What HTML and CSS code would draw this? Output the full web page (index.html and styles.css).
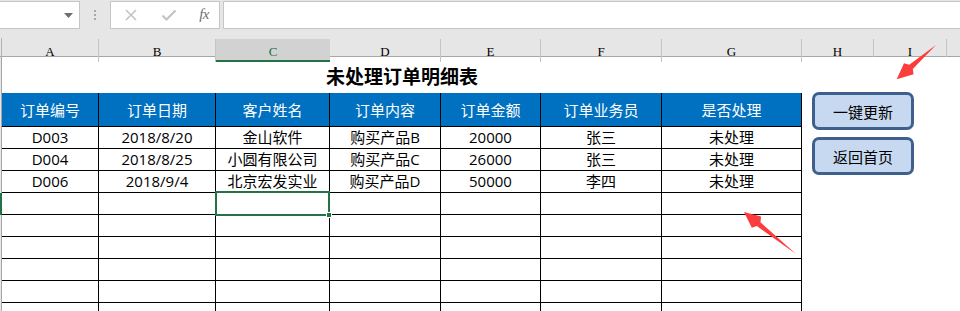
FILE: index.html
```html
<!DOCTYPE html>
<html lang="zh-CN">
<head>
<meta charset="utf-8">
<title>未处理订单明细表</title>
<link rel="stylesheet" href="styles.css">
</head>
<body>
<div class="app">
  <div class="toolbar">
    <div class="namebox">
      <svg class="caret" width="9" height="5" viewBox="0 0 9 5"><path d="M0 0H9L4.5 5Z" fill="#6e6e6e"/></svg>
    </div>
    <div class="grip"><i></i><i></i><i></i></div>
    <div class="fxbtns">
      <svg class="ico" width="14" height="14" viewBox="0 0 14 14"><path d="M2 2L12 12M12 2L2 12" stroke="#c3c3c3" stroke-width="1.6" fill="none"/></svg>
      <svg class="ico" width="16" height="14" viewBox="0 0 16 14"><path d="M1.5 7.5L5.5 11.5L14.5 2.5" stroke="#c3c3c3" stroke-width="2.2" fill="none"/></svg>
      <span class="fx">fx</span>
    </div>
    <div class="formula"></div>
  </div>

  <div class="colheads">
    <div class="edge"></div>
    <div class="ch">A</div>
    <div class="ch">B</div>
    <div class="ch sel">C</div>
    <div class="ch">D</div>
    <div class="ch">E</div>
    <div class="ch">F</div>
    <div class="ch">G</div>
    <div class="ch">H</div>
    <div class="ch">I</div>
    <div class="ch last"></div>
  </div>

  <div class="sheet">
    <div class="row title-row">
      <div class="edge"></div>
      <div class="title">未处理订单明细表</div>
      <div class="blank"></div><div class="blank"></div><div class="blank"></div>
    </div>
    <div class="row head-row">
      <div class="edge"></div>
      <div class="c h">订单编号</div>
      <div class="c h">订单日期</div>
      <div class="c h">客户姓名</div>
      <div class="c h">订单内容</div>
      <div class="c h">订单金额</div>
      <div class="c h">订单业务员</div>
      <div class="c h">是否处理</div>
      <div class="blank"></div><div class="blank"></div><div class="blank"></div>
    </div>
    <div class="row">
      <div class="edge"></div>
      <div class="c">D003</div><div class="c">2018/8/20</div><div class="c">金山软件</div><div class="c">购买产品B</div><div class="c">20000</div><div class="c">张三</div><div class="c">未处理</div>
      <div class="blank"></div><div class="blank"></div><div class="blank"></div>
    </div>
    <div class="row">
      <div class="edge"></div>
      <div class="c">D004</div><div class="c">2018/8/25</div><div class="c">小圆有限公司</div><div class="c">购买产品C</div><div class="c">26000</div><div class="c">张三</div><div class="c">未处理</div>
      <div class="blank"></div><div class="blank"></div><div class="blank"></div>
    </div>
    <div class="row">
      <div class="edge"></div>
      <div class="c">D006</div><div class="c">2018/9/4</div><div class="c">北京宏发实业</div><div class="c">购买产品D</div><div class="c">50000</div><div class="c">李四</div><div class="c">未处理</div>
      <div class="blank"></div><div class="blank"></div><div class="blank"></div>
    </div>
    <div class="row">
      <div class="edge active"></div>
      <div class="c"></div><div class="c"></div><div class="c"></div><div class="c"></div><div class="c"></div><div class="c"></div><div class="c"></div>
      <div class="blank"></div><div class="blank"></div><div class="blank"></div>
    </div>
    <div class="row">
      <div class="edge"></div>
      <div class="c"></div><div class="c"></div><div class="c"></div><div class="c"></div><div class="c"></div><div class="c"></div><div class="c"></div>
      <div class="blank"></div><div class="blank"></div><div class="blank"></div>
    </div>
    <div class="row">
      <div class="edge"></div>
      <div class="c"></div><div class="c"></div><div class="c"></div><div class="c"></div><div class="c"></div><div class="c"></div><div class="c"></div>
      <div class="blank"></div><div class="blank"></div><div class="blank"></div>
    </div>
    <div class="row">
      <div class="edge"></div>
      <div class="c"></div><div class="c"></div><div class="c"></div><div class="c"></div><div class="c"></div><div class="c"></div><div class="c"></div>
      <div class="blank"></div><div class="blank"></div><div class="blank"></div>
    </div>
    <div class="row">
      <div class="edge"></div>
      <div class="c"></div><div class="c"></div><div class="c"></div><div class="c"></div><div class="c"></div><div class="c"></div><div class="c"></div>
      <div class="blank"></div><div class="blank"></div><div class="blank"></div>
    </div>
    <div class="row">
      <div class="edge"></div>
      <div class="c"></div><div class="c"></div><div class="c"></div><div class="c"></div><div class="c"></div><div class="c"></div><div class="c"></div>
      <div class="blank"></div><div class="blank"></div><div class="blank"></div>
    </div>
  </div>

  <div class="selbox"><span class="handle"></span></div>

  <div class="shape-btn btn-update">一键更新</div>
  <div class="shape-btn btn-home">返回首页</div>

  <svg class="arrows" width="960" height="311" viewBox="0 0 960 311">
    <polygon fill="#fb3d3d" points="896.7,79.3 904.0,63.3 909.2,64.7 936,45 912.8,68.9 913.6,74.3"/>
    <polygon fill="#fb3d3d" points="744,212 761.0,216.5 760.5,222.3 796,254 756.9,226.1 751.8,227.7"/>
  </svg>
</div>
</body>
</html>
```
FILE: styles.css
```css
* { box-sizing: border-box; }

html, body {
  margin: 0;
  padding: 0;
  background: #ffffff;
}

body {
  width: 960px;
  height: 311px;
  overflow: hidden;
  font-family: "Open Sans", "Noto Sans CJK SC", sans-serif;
}

.app {
  position: relative;
  width: 960px;
  height: 311px;
  overflow: hidden;
  --cols: 2px 97px 117px 114px 111px 100px 121px 140px 72px 73px 13px;
}

/* ---------- formula toolbar ---------- */
.toolbar {
  height: 38px;
  background: #e6e6e6;
  display: flex;
  align-items: flex-start;
  padding-top: 1px;
}

.namebox {
  width: 80px;
  height: 28px;
  background: #ffffff;
  border: 1px solid #c6c6c6;
  border-left: none;
  display: flex;
  align-items: center;
  justify-content: flex-end;
  padding-right: 6px;
}

.grip {
  width: 30px;
  height: 28px;
  display: flex;
  flex-direction: column;
  align-items: center;
  justify-content: center;
  gap: 2px;
}
.grip i {
  display: block;
  width: 2px;
  height: 2px;
  background: #a9a9a9;
}

.fxbtns {
  width: 110px;
  height: 28px;
  background: #ffffff;
  border: 1px solid #c6c6c6;
  display: flex;
  align-items: center;
  justify-content: space-between;
  padding: 0 10px 0 13px;
}

.fx {
  font-family: "Liberation Serif", serif;
  font-style: italic;
  font-size: 15px;
  color: #6f6f6f;
  line-height: 1;
  padding-bottom: 2px;
  letter-spacing: -0.5px;
}

.formula {
  flex: 1;
  margin-left: 3px;
  height: 28px;
  background: #ffffff;
  border: 1px solid #c6c6c6;
  border-right: none;
}

/* ---------- column headers ---------- */
.colheads {
  display: grid;
  grid-template-columns: var(--cols);
  height: 19px;
  background: #e6e6e6;
  border-bottom: 1px solid #a6a6a6;
}

.colheads .edge {
  border-right: 1px solid #b3b3b3;
}

.ch {
  border-right: 1px solid #c4c4c4;
  margin-top: 1px;
  display: flex;
  align-items: center;
  justify-content: center;
  font-family: "Liberation Serif", serif;
  font-size: 13px;
  color: #000;
  padding-top: 3px;
}
.ch.sel {
  background: #d2d2d2;
  color: #217346;
  border-right: none;
  border-bottom: 2px solid #217346;
  padding-top: 5px;
}
.ch.last { border-right: none; }

/* ---------- sheet ---------- */
.row {
  display: grid;
  grid-template-columns: var(--cols);
  height: 22px;
}

.row .edge {
  background: #e6e6e6;
  border-right: 1px solid #a6a6a6;
}
.row .edge.active {
  background: #217346;
  border-right-color: #217346;
}

.title-row { height: 36px; }
.title-row .title {
  grid-column: span 7;
  display: flex;
  align-items: center;
  justify-content: center;
  font-family: "Noto Sans CJK SC", sans-serif;
  font-weight: bold;
  font-size: 19px;
  color: #000;
  padding-top: 1px;
}

.head-row { height: 34px; }

.c {
  border-right: 1px solid #000;
  border-bottom: 1px solid #000;
  display: flex;
  align-items: center;
  justify-content: center;
  font-size: 15px;
  color: #000;
  white-space: nowrap;
  line-height: 1;
}

.c.h {
  background: #0070c0;
  color: #ffffff;
  font-family: "Noto Sans CJK SC", sans-serif;
}

.blank { background: #ffffff; }

/* ---------- selection overlay ---------- */
.selbox {
  position: absolute;
  left: 215px;
  top: 191px;
  width: 115px;
  height: 25px;
  border: 2px solid #217346;
}
.handle {
  position: absolute;
  right: -4px;
  bottom: -4px;
  width: 6px;
  height: 6px;
  background: #217346;
  border: 1px solid #ffffff;
}

/* ---------- floating shape buttons ---------- */
.shape-btn {
  position: absolute;
  left: 812px;
  width: 102px;
  height: 38px;
  background: #c6d9f1;
  border: 3px solid #3f5f8c;
  border-radius: 7px;
  display: flex;
  align-items: center;
  justify-content: center;
  font-family: "Noto Sans CJK SC", sans-serif;
  font-size: 15px;
  color: #000;
}
.btn-update { top: 92px; }
.btn-home { top: 137px; }

.arrows {
  position: absolute;
  left: 0;
  top: 0;
  pointer-events: none;
}
```
